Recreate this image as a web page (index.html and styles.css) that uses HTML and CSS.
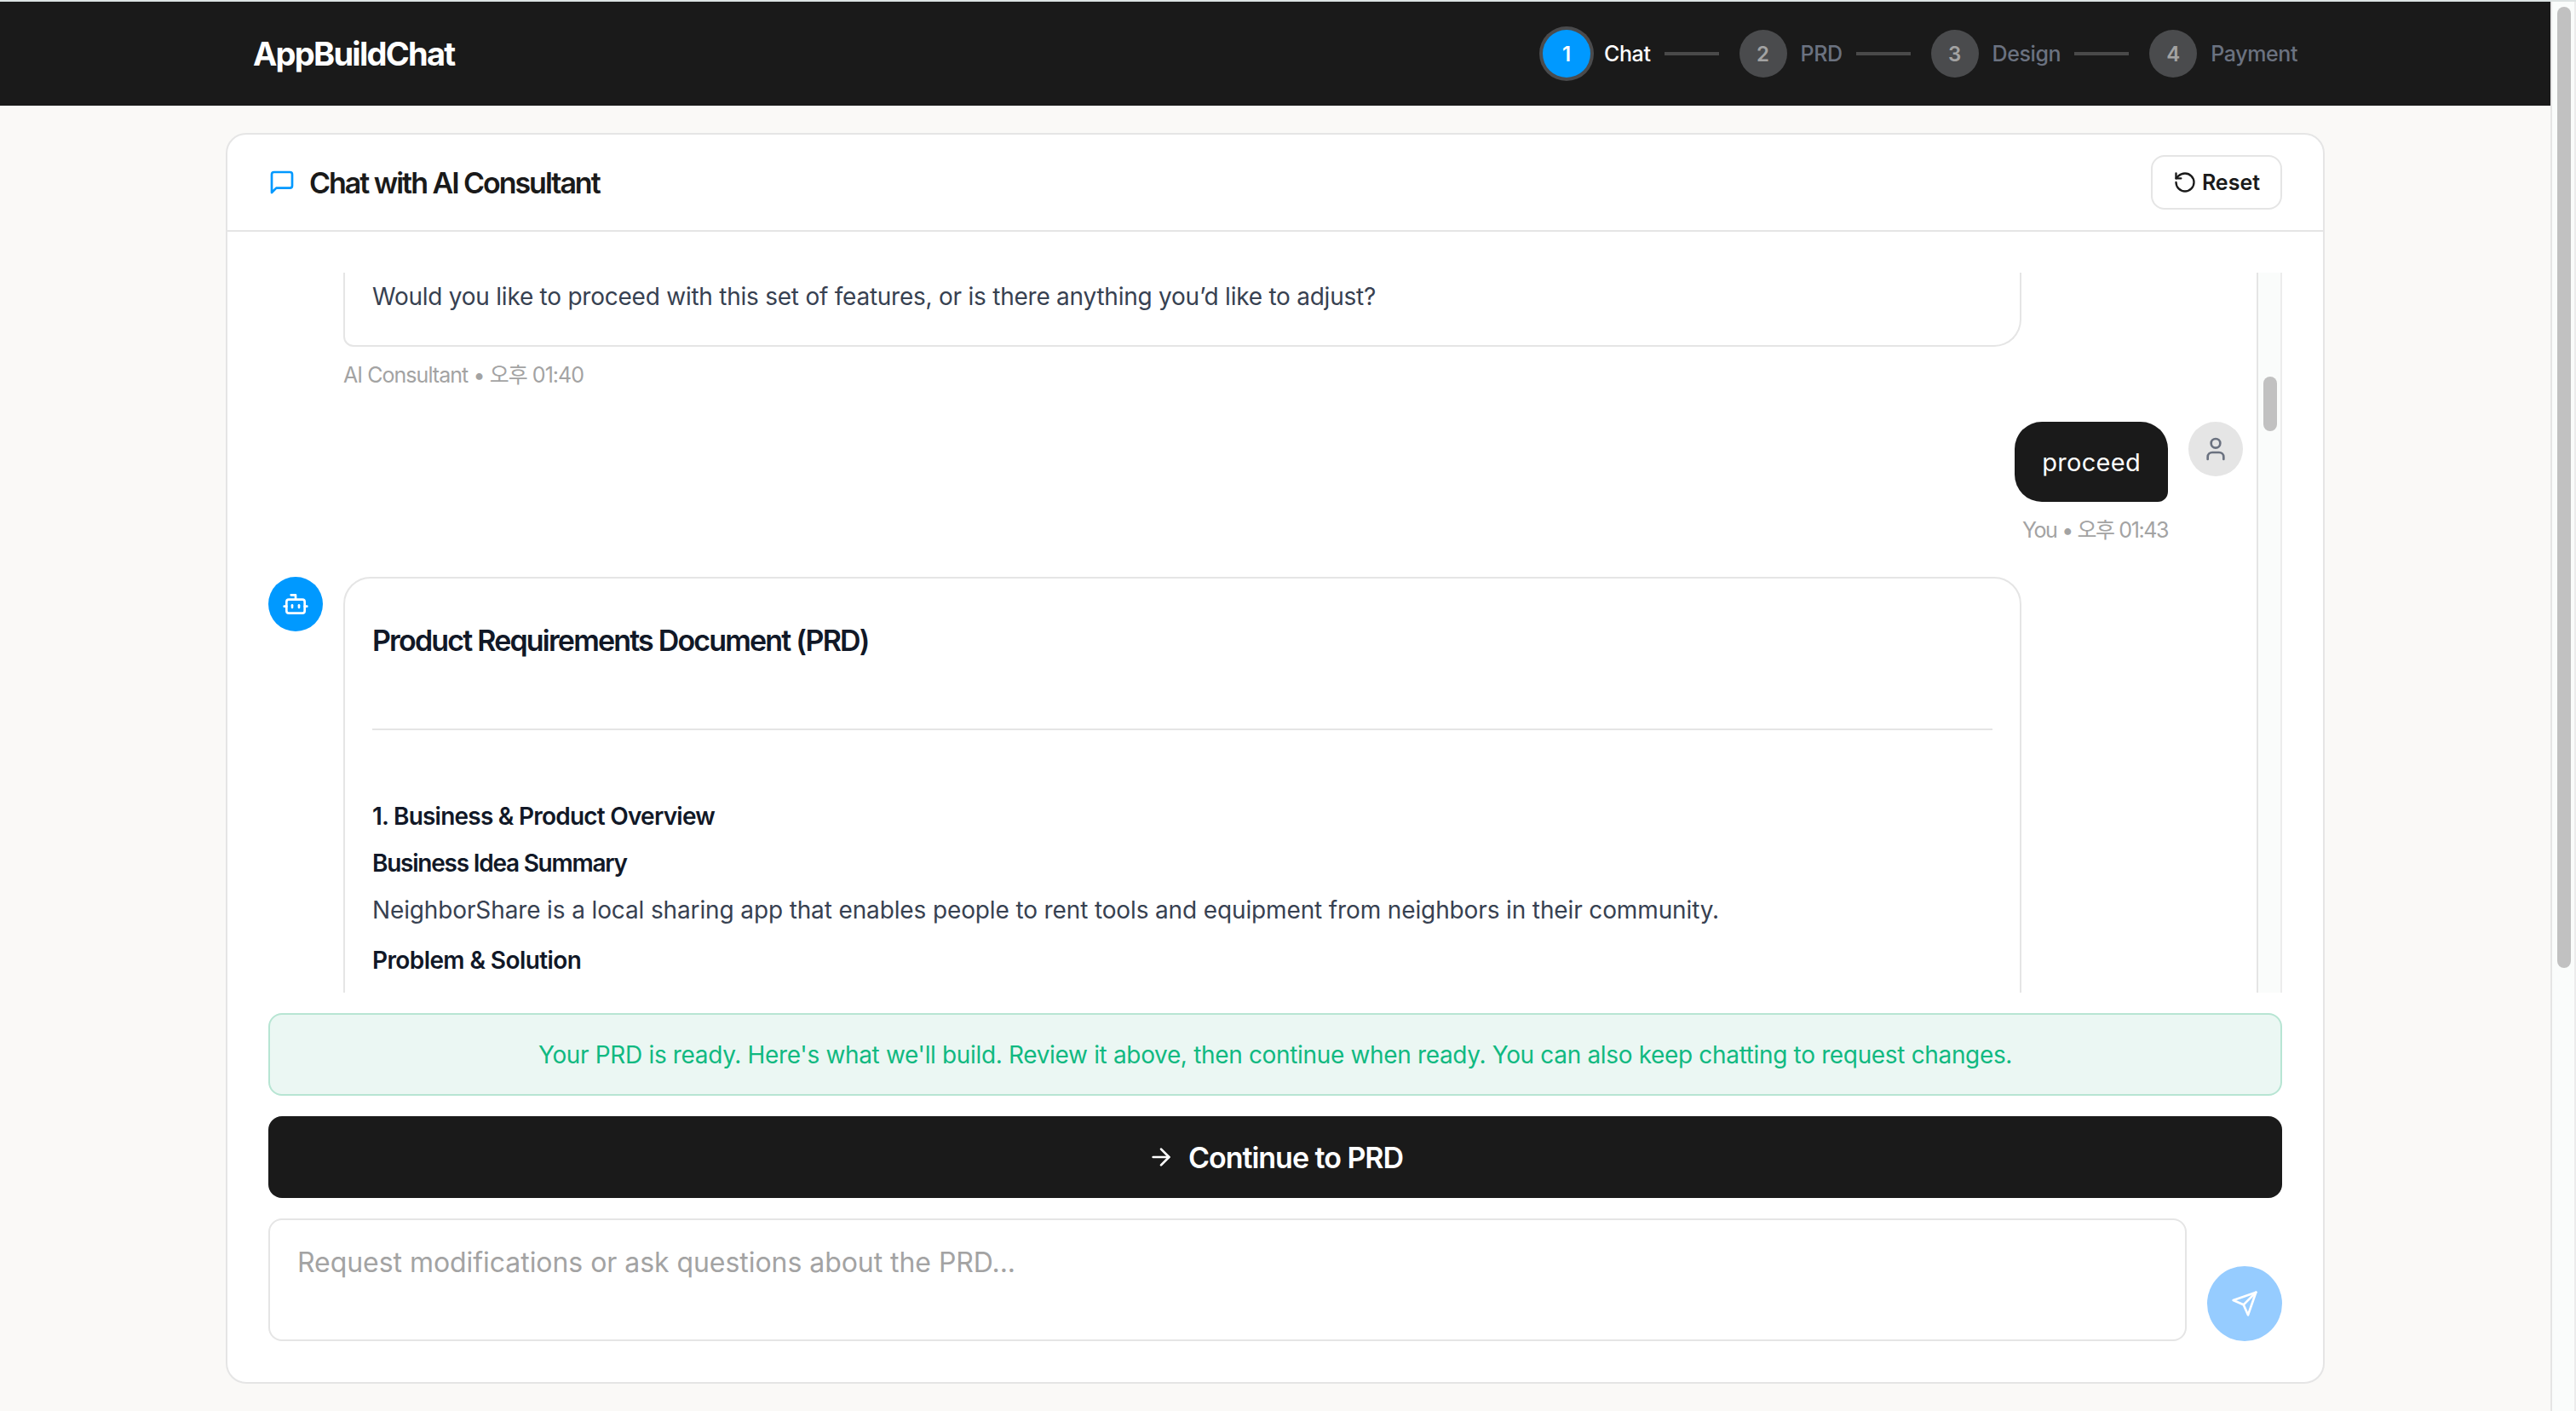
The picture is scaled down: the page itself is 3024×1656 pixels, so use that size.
FILE: index.html
```html
<!DOCTYPE html>
<html lang="en">
<head>
    <meta charset="UTF-8">
    <meta name="viewport" content="width=device-width, initial-scale=1.0">
    <title>AppBuildChat</title>
    <link rel="stylesheet" href="styles.css">
</head>
<body>
    <div class="page">
        <header class="site-header">
            <div class="header-inner">
                <div class="logo">AppBuildChat</div>
                <nav class="steps">
                    <div class="step active"><span class="step-number">1</span><span class="step-label">Chat</span></div>
                    <span class="step-line"></span>
                    <div class="step"><span class="step-number">2</span><span class="step-label">PRD</span></div>
                    <span class="step-line"></span>
                    <div class="step"><span class="step-number">3</span><span class="step-label">Design</span></div>
                    <span class="step-line"></span>
                    <div class="step"><span class="step-number">4</span><span class="step-label">Payment</span></div>
                </nav>
            </div>
        </header>

        <main class="chat-card">
            <div class="chat-header">
                <svg class="icon icon-blue" viewBox="0 0 24 24"><path d="M21 15a2 2 0 0 1-2 2H7l-4 4V5a2 2 0 0 1 2-2h14a2 2 0 0 1 2 2z"/></svg>
                <h1 class="chat-title">Chat with AI Consultant</h1>
                <button class="reset-btn">
                    <svg class="icon icon-sm" viewBox="0 0 24 24"><path d="M3 12a9 9 0 1 0 9-9 9.75 9.75 0 0 0-6.74 2.74L3 8"/><path d="M3 3v5h5"/></svg>
                    Reset
                </button>
            </div>

            <div class="chat-body">
                <div class="chat-scroll">
                    <div class="messages">
                        <div class="message ai">
                            <div class="avatar-space"></div>
                            <div class="message-content">
                                <div class="bubble bubble-cut">
                                    <p>Would you like to proceed with this set of features, or is there anything you’d like to adjust?</p>
                                </div>
                                <div class="meta">AI Consultant • 오후 01:40</div>
                            </div>
                        </div>

                        <div class="message user">
                            <div class="message-content">
                                <div class="bubble"><p>proceed</p></div>
                                <div class="meta">You • 오후 01:43</div>
                            </div>
                            <div class="avatar">
                                <svg class="icon" viewBox="0 0 24 24"><path d="M19 21v-2a4 4 0 0 0-4-4H9a4 4 0 0 0-4 4v2"/><circle cx="12" cy="7" r="4"/></svg>
                            </div>
                        </div>

                        <div class="message ai">
                            <div class="avatar">
                                <svg class="icon" viewBox="0 0 24 24"><path d="M12 8V4H8"/><rect width="16" height="12" x="4" y="8" rx="2"/><path d="M2 14h2"/><path d="M20 14h2"/><path d="M15 13v2"/><path d="M9 13v2"/></svg>
                            </div>
                            <div class="message-content">
                                <div class="bubble bubble-doc">
                                    <h2>Product Requirements Document (PRD)</h2>
                                    <hr>
                                    <h3>1. Business &amp; Product Overview</h3>
                                    <h4>Business Idea Summary</h4>
                                    <p>NeighborShare is a local sharing app that enables people to rent tools and equipment from neighbors in their community.</p>
                                    <h4 class="spaced">Problem &amp; Solution</h4>
                                </div>
                            </div>
                        </div>
                    </div>
                    <div class="inner-scrollbar"><div class="scroll-thumb"></div></div>
                </div>

                <div class="ready-banner">Your PRD is ready. Here's what we'll build. Review it above, then continue when ready. You can also keep chatting to request changes.</div>

                <button class="continue-btn">
                    <svg class="icon" viewBox="0 0 24 24"><path d="M5 12h14"/><path d="m12 5 7 7-7 7"/></svg>
                    Continue to PRD
                </button>

                <div class="input-row">
                    <div class="message-input">Request modifications or ask questions about the PRD...</div>
                    <button class="send-btn">
                        <svg class="icon" viewBox="0 0 24 24"><path d="m22 2-7 20-4-9-9-4Z"/><path d="M22 2 11 13"/></svg>
                    </button>
                </div>
            </div>
        </main>
    </div>
    <div class="page-scrollbar"><div class="scroll-thumb"></div></div>
</body>
</html>
```
FILE: styles.css
```css
* {
    box-sizing: border-box;
    margin: 0;
    padding: 0;
}

body {
    display: flex;
    height: 1656px;
    overflow: hidden;
    border-top: 2px solid #dde3e3;
    background: #faf9f7;
    font-family: Inter, "Noto Sans CJK KR", sans-serif;
    color: #1a1a1a;
}

button {
    border: none;
    font-family: inherit;
    cursor: pointer;
}

.page {
    flex: 1;
}

.icon {
    flex: none;
    width: 32px;
    height: 32px;
    fill: none;
    stroke: currentColor;
    stroke-width: 2;
    stroke-linecap: round;
    stroke-linejoin: round;
}

.icon-sm {
    width: 28px;
    height: 28px;
}

.icon-blue {
    color: #0099ff;
}

/* Header */
.site-header {
    height: 122px;
    background: #1a1a1a;
}

.header-inner {
    display: flex;
    align-items: center;
    justify-content: space-between;
    width: 2400px;
    height: 100%;
    margin: 0 auto;
}

.logo {
    color: white;
    font-size: 38px;
    font-weight: 700;
    letter-spacing: -1.75px;
}

.steps {
    display: flex;
    align-items: center;
}

.step {
    display: flex;
    align-items: center;
    gap: 16px;
    color: #6b7280;
    font-size: 25px;
    font-weight: 500;
}

.step-label {
    letter-spacing: -0.4px;
}

.step-number {
    display: flex;
    align-items: center;
    justify-content: center;
    width: 56px;
    height: 56px;
    border-radius: 50%;
    background: #4a4b4d;
    color: #a3a3a3;
    font-size: 24px;
    font-weight: 600;
}

.step.active {
    color: white;
}

.step.active .step-number {
    background: #0099ff;
    color: white;
    box-shadow: 0 0 0 4px #4a4b4d;
}

.step-line {
    width: 64px;
    height: 4px;
    margin: 0 24px 0 16px;
    background: #4a4a4a;
}

/* Chat card */
.chat-card {
    width: 2464px;
    height: 1468px;
    margin: 32px auto 0;
    border: 2px solid #e5e5e5;
    border-radius: 24px;
    background: white;
}

.chat-header {
    display: flex;
    align-items: center;
    gap: 16px;
    height: 114px;
    padding: 0 48px;
    border-bottom: 2px solid #e5e5e5;
}

.chat-title {
    font-size: 34px;
    font-weight: 600;
    letter-spacing: -2.04px;
}

.reset-btn {
    display: flex;
    align-items: center;
    gap: 6px;
    height: 64px;
    margin-left: auto;
    padding: 0 24px;
    border: 2px solid #e5e5e5;
    border-radius: 16px;
    background: white;
    color: #1a1a1a;
    font-size: 25px;
    font-weight: 600;
}

.chat-body {
    display: flex;
    flex-direction: column;
    gap: 24px;
    padding: 48px;
}

.chat-scroll {
    display: flex;
    height: 845px;
    overflow: hidden;
}

.messages {
    display: flex;
    flex: 1;
    flex-direction: column;
    gap: 34px;
    padding-right: 16px;
}

.inner-scrollbar {
    width: 30px;
    padding: 122px 6px 0;
    border-left: 2px solid #e5e5e5;
    border-right: 2px solid #ececec;
    background: #fafcfb;
}

.scroll-thumb {
    width: 16px;
    height: 64px;
    border-radius: 8px;
    background: #c1c1c1;
}

/* Messages */
.message {
    display: flex;
    align-items: flex-start;
    gap: 24px;
}

.message.user {
    justify-content: flex-end;
}

.avatar {
    display: flex;
    flex: none;
    align-items: center;
    justify-content: center;
    width: 64px;
    height: 64px;
    border-radius: 50%;
    background: #0099ff;
    color: white;
}

.user .avatar {
    background: #e5e5e5;
    color: #6b7280;
}

.avatar-space {
    width: 64px;
}

.ai .message-content {
    width: 1970px;
}

.bubble {
    padding: 32px;
    border: 2px solid #e5e5e5;
    border-radius: 32px 32px 32px 12px;
    color: #374151;
    font-size: 28px;
    letter-spacing: -0.13px;
    line-height: 51px;
}

.bubble-cut {
    height: 87px;
    padding: 3px 32px 0;
    border-top: none;
    border-radius: 0 0 32px 12px;
    letter-spacing: -0.24px;
}

.user .bubble {
    height: 94px;
    padding: 22px 32px;
    border: none;
    border-radius: 32px 32px 12px 32px;
    background: #1a1a1a;
    color: white;
    font-size: 29px;
    letter-spacing: 0.3px;
}

.meta {
    margin-top: 12px;
    color: #a3a3a3;
    font-size: 25px;
    letter-spacing: -0.95px;
    line-height: 42px;
}

.user .meta {
    letter-spacing: -1.4px;
    text-align: right;
}

.bubble-doc {
    height: 620px;
    padding-top: 47px;
}

.bubble-doc h2,
.bubble-doc h3,
.bubble-doc h4 {
    color: #111827;
    font-size: 28px;
    font-weight: 600;
}

.bubble-doc h2 {
    font-size: 34px;
    letter-spacing: -1.82px;
}

.bubble-doc hr {
    height: 2px;
    margin: 78px 0 76px;
    border: none;
    background: #e5e5e5;
}

.bubble-doc h3 {
    letter-spacing: -0.77px;
}

.bubble-doc h4 {
    letter-spacing: -1.24px;
}

.bubble-doc h4,
.bubble-doc p {
    margin-top: 4px;
}

.bubble-doc h4.spaced {
    margin-top: 8px;
    letter-spacing: -0.6px;
}

/* Footer controls */
.ready-banner {
    height: 97px;
    border: 2px solid #b7e5d3;
    border-radius: 16px;
    background: #ebf7f3;
    color: #10b981;
    font-size: 28px;
    letter-spacing: -0.34px;
    line-height: 94px;
    text-align: center;
}

.continue-btn {
    display: flex;
    align-items: center;
    justify-content: center;
    gap: 16px;
    height: 96px;
    border-radius: 16px;
    background: #1a1a1a;
    color: white;
    font-size: 34px;
    font-weight: 600;
    letter-spacing: -1.02px;
}

.input-row {
    display: flex;
    align-items: flex-end;
    gap: 24px;
}

.message-input {
    flex: 1;
    height: 144px;
    padding: 24px 32px;
    border: 2px solid #e5e5e5;
    border-radius: 16px;
    color: #a3a3a3;
    font-size: 32px;
    letter-spacing: -0.05px;
    line-height: 52px;
}

.send-btn {
    display: flex;
    align-items: center;
    justify-content: center;
    width: 88px;
    height: 88px;
    border-radius: 50%;
    background: #96ccff;
    color: white;
}

/* Page scrollbar */
.page-scrollbar {
    width: 30px;
    padding: 6px 6px 0;
    border-left: 2px solid #e5e5e5;
    border-right: 2px solid #ececec;
    background: #fafcfb;
}

.page-scrollbar .scroll-thumb {
    height: 1128px;
}
```
